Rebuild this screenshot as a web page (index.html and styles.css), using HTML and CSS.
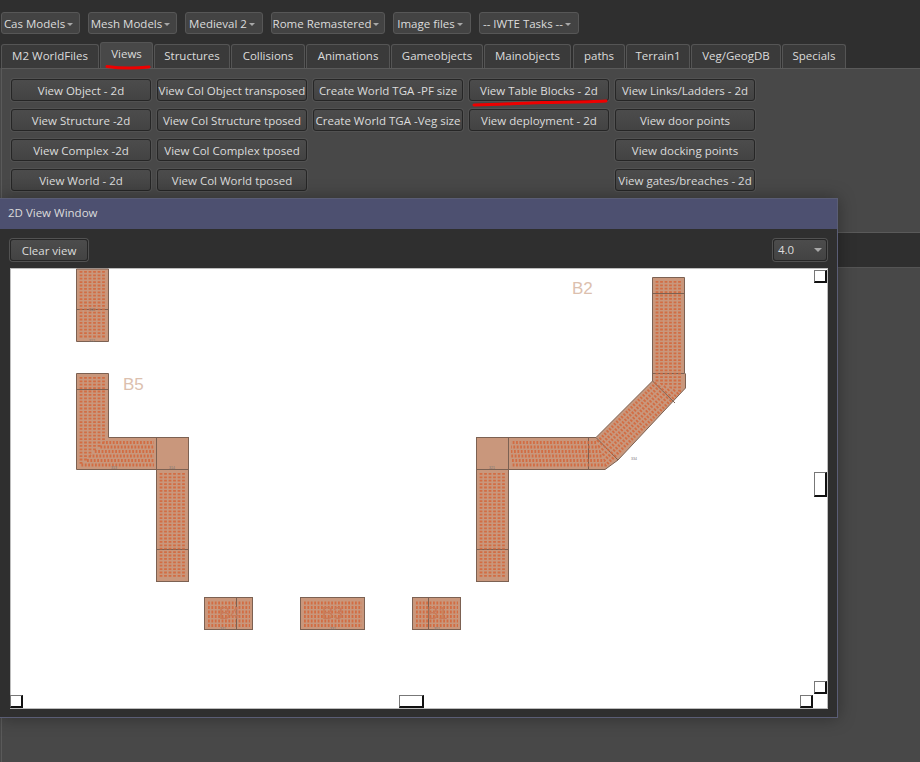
FILE: index.html
```html
<!DOCTYPE html>
<html lang="en">
<head>
  <meta charset="UTF-8" />
  <title>IWTE</title>
  <link rel="stylesheet" href="styles.css">
</head>
<body>
  <!-- Menu row -->
  <div class="menubar">
    <button class="btn menu w80">Cas Models<i class="caret"></i></button>
    <button class="btn menu w90">Mesh Models<i class="caret"></i></button>
    <button class="btn menu w79">Medieval 2<i class="caret"></i></button>
    <button class="btn menu w115">Rome Remastered<i class="caret"></i></button>
    <button class="btn menu w79">Image files<i class="caret"></i></button>
    <button class="btn menu w101">-- IWTE Tasks --<i class="caret"></i></button>
  </div>

  <!-- Tabs -->
  <div class="tabs">
    <div class="tab t98">M2 WorldFiles</div>
    <div class="tab active t53">Views
      <svg class="mark-views" width="46" height="6" viewBox="0 0 46 6"><path d="M2 2.5 C12 4 30 4.5 44 3" /></svg>
    </div>
    <div class="tab t76">Structures</div>
    <div class="tab t74">Collisions</div>
    <div class="tab t84">Animations</div>
    <div class="tab t92">Gameobjects</div>
    <div class="tab t88">Mainobjects</div>
    <div class="tab t52">paths</div>
    <div class="tab t64">Terrain1</div>
    <div class="tab t90">Veg/GeogDB</div>
    <div class="tab t64">Specials</div>
  </div>

  <!-- Views pane -->
  <div class="pane">
    <div class="col c140">
      <button class="btn">View Object - 2d</button>
      <button class="btn">View Structure -2d</button>
      <button class="btn">View Complex -2d</button>
      <button class="btn">View World - 2d</button>
    </div>
    <div class="col c150">
      <button class="btn">View Col Object transposed</button>
      <button class="btn">View Col Structure tposed</button>
      <button class="btn">View Col Complex tposed</button>
      <button class="btn">View Col World tposed</button>
    </div>
    <div class="col c150">
      <button class="btn">Create World TGA -PF size</button>
      <button class="btn">Create World TGA -Veg size</button>
    </div>
    <div class="col c140">
      <button class="btn has-mark">View Table Blocks - 2d
        <svg class="mark-blocks" width="136" height="8" viewBox="0 0 136 8"><path d="M2 6 C30 5.5 50 4 70 3.5 C95 3 115 3 134 2" /></svg>
      </button>
      <button class="btn">View deployment - 2d</button>
    </div>
    <div class="col c140">
      <button class="btn">View Links/Ladders - 2d</button>
      <button class="btn">View door points</button>
      <button class="btn">View docking points</button>
      <button class="btn">View gates/breaches - 2d</button>
    </div>
  </div>
  <div class="band"></div>
  <div class="rest"></div>

  <!-- Floating 2D view window -->
  <div class="window">
    <div class="titlebar">2D View Window</div>
    <div class="win-tools">
      <button class="btn clear">Clear view</button>
      <div class="btn combo">4.0<i class="caret big"></i></div>
    </div>
    <div class="canvas">
      <svg class="drawing" width="818" height="441" viewBox="10 268 818 441">
        <!-- B5 group -->
        <path class="wall" d="M76.5 269V341.5H108.5V269Z" />
        <path class="wall" d="M76.5 373.5H108.5V437.5H156.5V469.5H76.5Z" />
        <rect class="wall" x="156.5" y="437.5" width="32" height="32" />
        <rect class="wall" x="156.5" y="469.5" width="32" height="112" />
        <path class="seam" d="M76.5 309.5H108.5M76.5 389.5H108.5M156.5 549.5H188.5" />
        <path class="dots" d="M81 271V338M85.5 271V338M90 271V338M94.5 271V338M99 271V338M103.5 271V338" />
        <path class="dots" d="M81 377V465H154M85.5 377V460.5H154M90 377V456H154M94.5 377V451.5H154M99 377V447H154M103.5 377V442.5H154" />
        <path class="dots" d="M161 473V578M165.5 473V578M170 473V578M174.5 473V578M179 473V578M183.5 473V578" />

        <!-- B2 group -->
        <rect class="wall" x="476.5" y="437.5" width="32" height="32" />
        <rect class="wall" x="476.5" y="469.5" width="32" height="112" />
        <rect class="wall" x="508.5" y="437.5" width="80" height="32" />
        <path class="wall" d="M588.5 437.5H596L652.5 381V277.5H684.5V373L685.5 374V388L618 460L605 469.5H588.5Z" />
        <path class="seam" d="M476.5 549.5H508.5M588.5 437.5V469.5M652.5 293.5H684.5M652.5 373.5H684.5M652.5 381L675 403M596 437.5L618 460" />
        <path class="dots" d="M481 473V578M485.5 473V578M490 473V578M494.5 473V578M499 473V578M503.5 473V578" />
        <path class="dots" d="M657 281V382L596.5 442.5H511M661.5 281V383.9L598.4 447H511M666 281V385.8L600.3 451.5H511M670.5 281V387.7L602.2 456H511M675 281V389.6L604.1 460.5H511M679.5 281V391.5L606 465H511" />

        <!-- Loose blocks -->
        <rect class="wall" x="204.5" y="597.5" width="48" height="32" />
        <rect class="wall" x="300.5" y="597.5" width="64" height="32" />
        <rect class="wall" x="412.5" y="597.5" width="48" height="32" />
        <path class="dots" d="M208 603H250M208 607.5H250M208 612H250M208 616.5H250M208 621H250M208 625.5H250" />
        <path class="dots" d="M304 603H362M304 607.5H362M304 612H362M304 616.5H362M304 621H362M304 625.5H362" />
        <path class="dots" d="M416 603H458M416 607.5H458M416 612H458M416 616.5H458M416 621H458M416 625.5H458" />
        <path class="seam" d="M236.5 597.5V629.5M428.5 597.5V629.5" />

        <!-- Labels -->
        <text class="blk" x="123" y="390">B5</text>
        <text class="blk" x="572" y="294">B2</text>
        <text class="blk dark" x="219" y="619">B4</text>
        <text class="blk dark" x="322" y="619">B3</text>
        <text class="blk dark" x="427" y="619">B1</text>
        <text class="tiny" x="631" y="460">334</text>
        <text class="tiny" x="89" y="311">311</text>
        <text class="tiny" x="89" y="342">312</text>
        <text class="tiny" x="111" y="469">313</text>
        <text class="tiny" x="169" y="469">314</text>
        <text class="tiny" x="489" y="469">321</text>
        <text class="tiny" x="220" y="630">341</text>
        <text class="tiny" x="330" y="630">331</text>
        <text class="tiny" x="434" y="630">351</text>
      </svg>
      <span class="handle top-right"></span>
      <span class="handle mid-right"></span>
      <span class="handle bottom-left"></span>
      <span class="handle bottom-mid"></span>
      <span class="handle bottom-right"></span>
      <span class="handle corner"></span>
    </div>
  </div>
</body>
</html>
```

FILE: styles.css
```css
* {
  box-sizing: border-box;
}
body {
  margin: 0;
  height: 762px;
  overflow: hidden;
  position: relative;
  background-color: #484848;
  color: #dcdcdc;
  font-family: "Open Sans", sans-serif;
  font-size: 11.5px;
}

/* buttons */
.btn {
  display: block;
  height: 22px;
  padding: 0;
  font: inherit;
  color: #dcdcdc;
  background: linear-gradient(#4c4c4c, #434343);
  border: 1px solid #262626;
  border-radius: 3px;
  box-shadow: 0 0 0 1px #525252;
  white-space: nowrap;
  text-align: center;
}
.caret {
  display: inline-block;
  margin-left: 2px;
  vertical-align: 2px;
  border-left: 3px solid transparent;
  border-right: 3px solid transparent;
  border-top: 3px solid #a8a8a8;
}

/* menu row */
.menubar {
  display: flex;
  gap: 8px;
  height: 42px;
  padding: 12px 0 0 1px;
  background-color: #2f2f2f;
}
.menu {
  padding-right: 4px;
  background: #434343;
  border-color: #575757;
  box-shadow: none;
}
.w80 { width: 79px; }
.w90 { width: 89px; }
.w79 { width: 78px; }
.w115 { width: 114px; }
.w101 { width: 100px; }

/* tabs */
.tabs {
  display: flex;
  align-items: flex-end;
  gap: 1px;
  height: 26px;
  padding-left: 1px;
  background-color: #2f2f2f;
}
.tab {
  height: 24px;
  padding-top: 3px;
  text-align: center;
  background-color: #3a3a3a;
  border: 1px solid #555;
  border-bottom: 0;
  border-radius: 3px 3px 0 0;
}
.tab.active {
  position: relative;
  height: 26px;
  background-color: #484848;
}
.t98 { width: 98px; }
.t53 { width: 53px; }
.t76 { width: 76px; }
.t74 { width: 74px; }
.t84 { width: 84px; }
.t92 { width: 92px; }
.t88 { width: 87px; }
.t52 { width: 52px; margin-left: 1px; }
.t64 { width: 64px; }
.t90 { width: 90px; }

.mark-views {
  position: absolute;
  left: 4px;
  top: 21px;
}
.mark-blocks {
  position: absolute;
  left: 2px;
  top: 19px;
}
.mark-views path,
.mark-blocks path {
  fill: none;
  stroke: #ee0000;
  stroke-width: 3;
  stroke-linecap: round;
}
.has-mark {
  position: relative;
}

/* views pane */
.pane {
  display: flex;
  gap: 6px;
  height: 165px;
  margin-left: 1px;
  padding: 10px 0 0 9px;
  background-color: #484848;
  border-top: 1px solid #5a5a5a;
  border-left: 1px solid #5a5a5a;
  border-bottom: 1px solid #5a5a5a;
}
.col {
  display: flex;
  flex-direction: column;
  gap: 8px;
}
.c140 { width: 140px; }
.c150 { width: 150px; }
.c140 .btn,
.c150 .btn {
  width: 100%;
}
.band {
  height: 35px;
  margin-left: 1px;
  background-color: #2f2f2f;
  border-bottom: 1px solid #555;
}
.rest {
  height: 494px;
  margin-left: 1px;
  border-left: 1px solid #5a5a5a;
}

/* floating window */
.window {
  position: absolute;
  left: 0;
  top: 198px;
  width: 838px;
  height: 520px;
  background-color: #2f2f2f;
  border: 1px solid #5a5d75;
  border-left: 0;
  box-shadow: 0 0 16px rgba(0, 0, 0, 0.35);
}
.titlebar {
  height: 30px;
  padding: 6px 0 0 8px;
  background-color: #4d5070;
}
.win-tools {
  display: flex;
  justify-content: space-between;
  padding: 10px 10px 0 10px;
  height: 39px;
}
.clear {
  width: 78px;
}
.combo {
  position: relative;
  width: 54px;
  padding: 2px 0 0 4px;
  text-align: left;
}
.caret.big {
  position: absolute;
  right: 4px;
  top: 8px;
  border-left-width: 4px;
  border-right-width: 4px;
  border-top-width: 4px;
}
.canvas {
  position: relative;
  width: 818px;
  height: 441px;
  margin-left: 10px;
  background-color: #fff;
  box-shadow: 0 0 0 1px #bdbdbd inset;
}
.drawing {
  display: block;
}
.wall {
  fill: #c9977c;
  stroke: #7c6152;
}
.seam {
  fill: none;
  stroke: #7c6152;
}
.dots {
  fill: none;
  stroke: #d4663a;
  stroke-width: 2.8;
  stroke-dasharray: 1.8 1.6;
  opacity: 0.85;
  filter: blur(0.4px);
}
.blk {
  font-family: "Liberation Sans", sans-serif;
  font-size: 17px;
  fill: #dcc0ae;
}
.blk.dark {
  fill: #c97a58;
}
.tiny {
  font-family: "Liberation Sans", sans-serif;
  font-size: 3.5px;
  fill: #777;
}

/* resize handles */
.handle {
  position: absolute;
  width: 13px;
  height: 13px;
  background-color: #fff;
  border: 1px solid #777;
  border-right: 2px solid #111;
  border-bottom: 2px solid #111;
}
.top-right { left: 804px; top: 2px; }
.mid-right { left: 804px; top: 204px; height: 25px; }
.bottom-left { left: 0; top: 427px; }
.bottom-mid { left: 389px; top: 427px; width: 25px; }
.bottom-right { left: 790px; top: 427px; }
.corner { left: 804px; top: 413px; }
```
